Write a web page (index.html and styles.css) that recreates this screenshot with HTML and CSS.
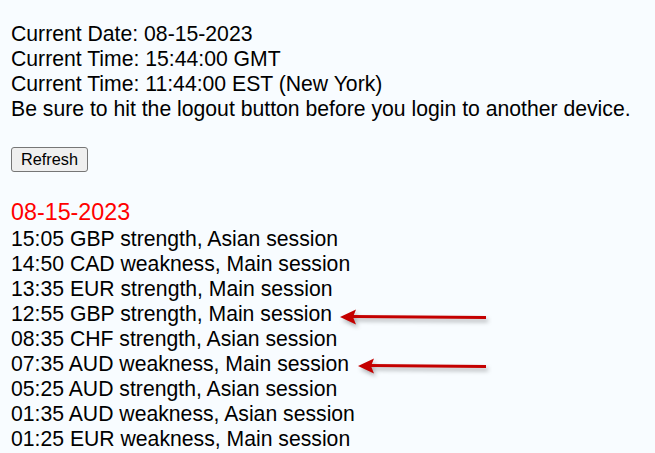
FILE: index.html
```html
<!DOCTYPE html>
<html lang="en">
<head>
  <meta charset="UTF-8">
  <meta name="viewport" content="width=device-width, initial-scale=1.0">
  <title>Signals</title>
  <link rel="stylesheet" href="styles.css">
</head>
<body>
  <div class="page">
    <div class="clock">
      <div>Current Date: 08-15-2023</div>
      <div>Current Time: 15:44:00 GMT</div>
      <div>Current Time: 11:44:00 EST (New York)</div>
      <div>Be sure to hit the logout button before you login to another device.</div>
    </div>

    <button class="refresh">Refresh</button>

    <div class="signals">
      <div class="signals-date">08-15-2023</div>
      <ul class="signal-list">
        <li>15:05 GBP strength, Asian session</li>
        <li>14:50 CAD weakness, Main session</li>
        <li>13:35 EUR strength, Main session</li>
        <li>12:55 GBP strength, Main session</li>
        <li>08:35 CHF strength, Asian session</li>
        <li>07:35 AUD weakness, Main session</li>
        <li>05:25 AUD strength, Asian session</li>
        <li>01:35 AUD weakness, Asian session</li>
        <li>01:25 EUR weakness, Main session</li>
      </ul>
    </div>

    <!-- annotation arrows -->
    <svg class="arrow arrow-one" width="152" height="22" viewBox="0 0 152 22">
      <line x1="14" y1="10.5" x2="148" y2="11.5" stroke="#c40000" stroke-width="3"/>
      <polygon points="2,11 18,3.5 15,11 18,18.5" fill="#c40000"/>
    </svg>
    <svg class="arrow arrow-two" width="134" height="22" viewBox="0 0 134 22">
      <line x1="14" y1="10.5" x2="130" y2="11.5" stroke="#c40000" stroke-width="3"/>
      <polygon points="2,11 18,3.5 15,11 18,18.5" fill="#c40000"/>
    </svg>
  </div>
</body>
</html>
```

FILE: styles.css
```css
body {
  margin: 0;
  background-color: #f8fcff;
  color: #000;
  font-family: "Liberation Sans", Arial, sans-serif;
}
.page {
  position: relative;
  padding: 21px 0 0 11px;
  height: 432px;
  overflow: hidden;
}
.clock {
  font-size: 21.2px;
  line-height: 25px;
}
.refresh {
  display: block;
  margin-top: 26px;
  height: 25px;
  padding: 0 9px;
  box-sizing: border-box;
  font-family: "Liberation Sans", Arial, sans-serif;
  font-size: 16.3px;
  color: #000;
  background-color: #efefef;
  border: 1px solid #767676;
  border-radius: 3px;
}
.signals { margin-top: 27px; }
.signals-date {
  font-size: 23.3px;
  line-height: 27px;
  color: #ff0000;
}
.signal-list {
  list-style: none;
  margin: 0;
  padding: 0;
  font-size: 21.2px;
  line-height: 25px;
}
.arrow {
  position: absolute;
  filter: drop-shadow(2px 3px 2px rgba(0,0,0,0.3));
}
.arrow-one { left: 338px; top: 306px; }
.arrow-two { left: 356px; top: 355px; }
```
